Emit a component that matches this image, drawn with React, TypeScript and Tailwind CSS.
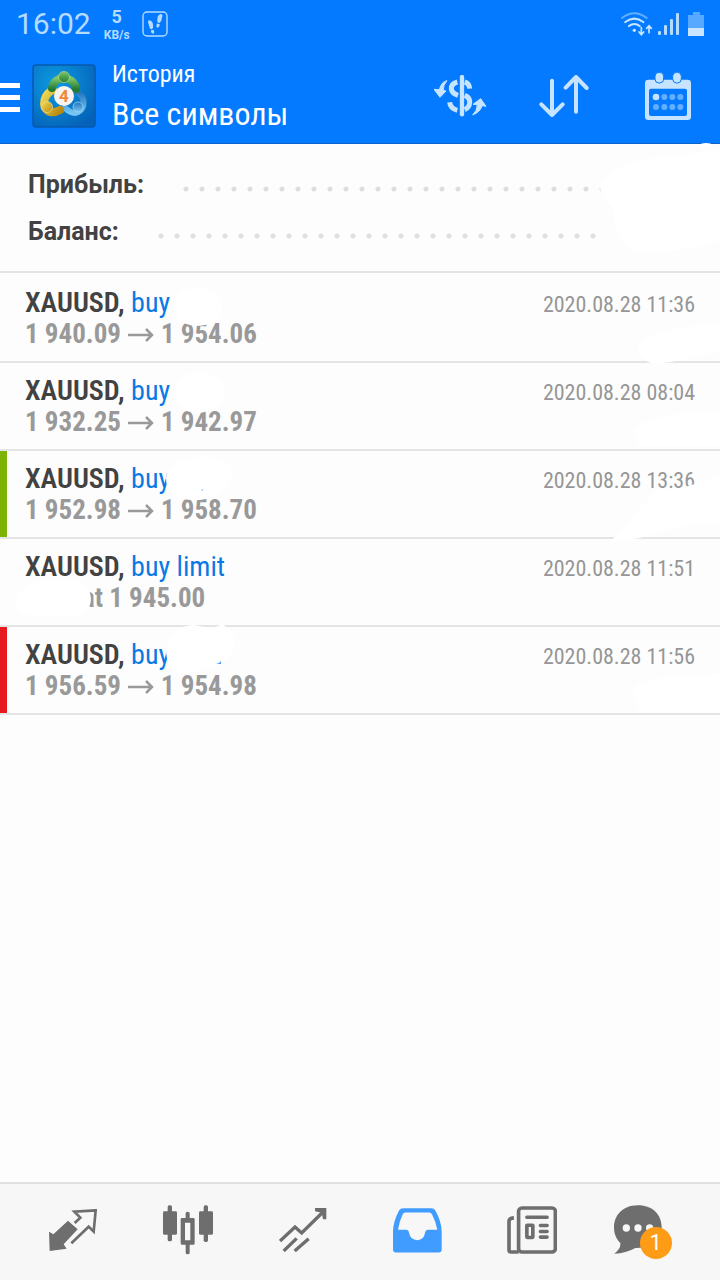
import type { ReactNode } from "react";

type Deal = {
  symbol: string;
  type: string;
  from?: string;
  to?: string;
  at?: string;
  time: string;
  mark?: "green" | "red";
};

const deals: Deal[] = [
  { symbol: "XAUUSD", type: "buy", from: "1 940.09", to: "1 954.06", time: "2020.08.28 11:36" },
  { symbol: "XAUUSD", type: "buy", from: "1 932.25", to: "1 942.97", time: "2020.08.28 08:04" },
  { symbol: "XAUUSD", type: "buy", from: "1 952.98", to: "1 958.70", time: "2020.08.28 13:36", mark: "green" },
  { symbol: "XAUUSD", type: "buy limit", at: "1 945.00", time: "2020.08.28 11:51" },
  { symbol: "XAUUSD", type: "buy", from: "1 956.59", to: "1 954.98", time: "2020.08.28 11:56", mark: "red" },
];

const condensed = "font-['Roboto_Condensed','Liberation_Sans_Narrow',Roboto,sans-serif]";

function StatusBar() {
  return (
    <div className="flex h-12 items-center pr-4 pl-4 text-[#b5dbff]">
      <span className="text-[30px] leading-8">16:02</span>
      <div className="ml-3 flex w-7 flex-col items-center font-bold">
        <span className="text-[18px] leading-[22px]">5</span>
        <span className="text-[12px] leading-[14px]">KB/s</span>
      </div>
      <svg className="ml-[11px] h-[26px] w-[26px]" viewBox="0 0 26 26" fill="currentColor">
        <rect x="1" y="1" width="24" height="24" rx="4" fill="none" stroke="currentColor" strokeWidth="1.4" />
        <path d="M6 11Q6 9 8.200 9.400Q11 10.500 11 14Q11.500 17.500 9.800 18.200Q8 18.500 7.400 16Z" />
        <path d="M8.800 19.500L11.600 18.800Q13 22 11.200 22.800Q9.300 22.800 8.800 19.500Z" />
        <path d="M20.500 4.500Q20 2.600 17.800 3.200Q15.300 4.500 15.300 8Q15 11.500 16.600 12Q18.400 12.300 19.300 9.600Z" />
        <path d="M17.800 13.300L15 12.600Q13.600 15.800 15.400 16.700Q17.200 16.600 17.800 13.300Z" />
      </svg>
      <svg className="ml-auto h-[24px] w-[32px]" viewBox="657 35 96 72" fill="none" stroke="#c9e5ff" strokeLinecap="round">
        <path d="M660 53Q697 24 734 53" stroke="#62afff" strokeWidth="6" />
        <path d="M670 65Q697 45 724 65M681 77Q697 65 713 77" strokeWidth="6.5" />
        <circle cx="697" cy="90" r="5" fill="#c9e5ff" stroke="none" />
        <path d="M718 82V102M711 95L718 103L725 95M741 97V80M734 84L741 76L748 84" strokeWidth="5" />
      </svg>
      <svg className="ml-1 h-6 w-[22px]" viewBox="0 0 22 24" fill="#b5dbff">
        <rect x="1" y="19" width="3" height="4" rx="1" />
        <rect x="7" y="13" width="3" height="10" rx="1" />
        <rect x="13" y="7" width="3" height="16" rx="1" />
        <rect x="19" y="1" width="3" height="22" rx="1" />
      </svg>
      <svg className="ml-[9px] h-6 w-4" viewBox="0 0 16 24">
        <path d="M5 0h7v3h4v13H0V3h5z" fill="#57a9ff" />
        <path d="M0 16h16v8H0z" fill="#c9e5ff" />
      </svg>
    </div>
  );
}

function Logo() {
  return (
    <svg className="h-16 w-16" viewBox="0 0 64 64">
      <defs>
        <radialGradient id="tile" cx="35%" cy="30%" r="80%">
          <stop offset="0" stopColor="#0d9ae0" />
          <stop offset="1" stopColor="#0462b8" />
        </radialGradient>
        <linearGradient id="green" x1="0" y1="0" x2="0" y2="1">
          <stop offset="0" stopColor="#7cc46a" />
          <stop offset="1" stopColor="#237c35" />
        </linearGradient>
        <linearGradient id="gold" x1="0" y1="0" x2="1" y2="1">
          <stop offset="0" stopColor="#f2dc5a" />
          <stop offset="1" stopColor="#b98a10" />
        </linearGradient>
        <linearGradient id="sky" x1="0" y1="0" x2="0" y2="1">
          <stop offset="0" stopColor="#2375bd" />
          <stop offset="1" stopColor="#76c6f3" />
        </linearGradient>
      </defs>
      <rect x="1" y="1" width="62" height="62" rx="3" fill="url(#tile)" stroke="#0959ae" strokeWidth="1.5" />
      <path d="M45 28C53 32 54 44 46 48Q41 51 33 44" fill="none" stroke="url(#sky)" strokeWidth="6" strokeLinecap="round" />
      <path d="M21 26C12 30 9 42 16 47Q21 50 28 46" fill="none" stroke="url(#gold)" strokeWidth="8" strokeLinecap="round" />
      <path d="M20 24C22 11 42 11 44 25" fill="none" stroke="url(#green)" strokeWidth="8" strokeLinecap="round" />
      <circle cx="32" cy="13" r="5.5" fill="url(#green)" stroke="#b9dc7e" strokeWidth="0.7" />
      <circle cx="15" cy="43" r="5.5" fill="url(#gold)" stroke="#f0e08a" strokeWidth="0.7" />
      <circle cx="46" cy="43" r="5" fill="url(#sky)" stroke="#a5daf7" strokeWidth="0.7" />
      <circle cx="32" cy="32" r="10" fill="#f7f3ee" />
      <text x="32" y="38" textAnchor="middle" fontSize="17" fontWeight="700" fill="#f0873a">
        4
      </text>
    </svg>
  );
}

function Header() {
  return (
    <header className="bg-[#037aff]">
      <StatusBar />
      <div className="flex h-24 items-center border-b border-[#0a63c9] pr-[29px]">
        <button aria-label="Меню" className="mt-1 flex w-5 flex-col gap-[7px]">
          <span className="h-[5px] bg-white" />
          <span className="h-[5px] bg-white" />
          <span className="h-[5px] bg-white" />
        </button>
        <div className="ml-3">
          <Logo />
        </div>
        <h1 className={`ml-4 flex-1 text-white ${condensed}`}>
          <span className="block text-[24px] leading-9">История</span>
          <span className="block text-[32px] leading-11">Все символы</span>
        </h1>
        <button aria-label="Валюта">
          <svg className="h-[42px] w-[53px]" viewBox="102 222 159 126" fill="none" stroke="#c6e4ff">
            <path d="M186 228V340" strokeWidth="13" strokeLinecap="round" />
            <path d="M172 243Q153 248 154 264Q156 277 174 283M194 243Q208 247 209 263M194 283Q210 289 209 305Q208 320 194 326M149 304Q151 323 172 328" strokeWidth="15" />
            <path d="M141 239Q124 242 118 266L102 265L120 289L138 270L130 268Q129 252 141 239ZM218 342Q232 328 232 311L219 310L242 293L258 316L246 314Q241 333 218 342Z" fill="#c6e4ff" strokeWidth="3" strokeLinejoin="round" />
          </svg>
        </button>
        <button aria-label="Сортировка" className="ml-[52px]">
          <svg className="h-[42px] w-[50px]" viewBox="417 224 150 126" fill="none" stroke="#c6e4ff" strokeWidth="12" strokeLinecap="round" strokeLinejoin="round">
            <path d="M456 241V343M424 312L456 344L488 312M528 334V231M497 262L528 230L560 263" />
          </svg>
        </button>
        <button aria-label="Период" className="ml-14">
          <svg className="h-12 w-[46px]" viewBox="735 212 138 144" fill="#c6e4ff">
            <path d="M745 235H863Q873 235 873 245V346Q873 356 863 356H745Q735 356 735 346V245Q735 235 745 235ZM753 262Q747 262 747 268V338Q747 344 753 344H855Q861 344 861 338V268Q861 262 855 262Z" fillRule="evenodd" />
            <rect x="765" y="213" width="26" height="32" rx="12" stroke="#037aff" strokeWidth="3" />
            <rect x="818" y="213" width="26" height="32" rx="12" stroke="#037aff" strokeWidth="3" />
            <circle cx="768" cy="287" r="10" />
            <g fill="#62afff">
              <circle cx="793" cy="287" r="9" />
              <circle cx="817" cy="287" r="9" />
              <circle cx="841" cy="287" r="9" />
              <circle cx="768" cy="317" r="9" />
              <circle cx="793" cy="317" r="9" />
              <circle cx="817" cy="317" r="9" />
              <circle cx="841" cy="317" r="9" />
            </g>
          </svg>
        </button>
      </div>
    </header>
  );
}

function SummaryRow({ label }: { label: string }) {
  return (
    <div className="flex h-[47px] items-center">
      <dt className="text-[25px] leading-8 font-bold text-[#424242]">{label}</dt>
      <dd className="mt-2 ml-[34px] h-4 flex-1 bg-[radial-gradient(circle,#dedede_2px,transparent_3px)] bg-[length:16px_16px]" />
    </div>
  );
}

function DealRow({ deal }: { deal: Deal }) {
  const mark =
    deal.mark === "green"
      ? "border-l-[#7cb305]"
      : deal.mark === "red"
        ? "border-l-[#e5191f]"
        : "border-l-transparent";
  return (
    <li className={`border-b-2 border-b-[#e4e4e4] ${condensed}`}>
      <div className={`border-l-[7px] pt-3 pr-[25px] pb-3 pl-[18px] ${mark}`}>
        <div className="flex items-center justify-between">
          <h2 className="text-[28px] leading-8 font-semibold text-[#424242]">
            {deal.symbol}, <span className="font-normal text-[#0b79e3]">{deal.type}</span>
          </h2>
          <time className="pt-1 text-[22px] leading-7 text-[#969696]">{deal.time}</time>
        </div>
        {deal.at ? (
          <p className="pt-px pl-[57px] text-[27px] leading-[29px] font-bold text-[#999999]">at {deal.at}</p>
        ) : (
          <p className="flex items-center pt-px text-[27px] leading-[29px] font-bold text-[#999999]">
            {deal.from}
            <svg className="mx-[7px] h-4 w-[26px]" viewBox="0 0 26 16" fill="none" stroke="currentColor" strokeWidth="2.5">
              <path d="M0 8H24M18 2L24 8L18 14" />
            </svg>
            {deal.to}
          </p>
        )}
      </div>
    </li>
  );
}

// White brush strokes that hide the amounts, lying over the list
function Strokes() {
  return (
    <>
      <svg className="pointer-events-none absolute top-0 left-0 h-[580px] w-[320px]" viewBox="0 144 320 580" fill="#fff">
        <path d="M174 304Q174 288 200 288Q222 290 222 308Q222 325 196 326Q174 324 174 304Z" />
        <path d="M174 390Q174 374 200 373Q224 375 224 392Q223 412 196 413Q174 411 174 390Z" />
        <path d="M166 478Q168 460 202 457Q232 458 232 474Q232 496 200 500Q166 502 166 478Z" />
        <path d="M16 600Q20 582 50 580Q82 578 89 590Q95 606 82 614Q50 620 25 614Q16 610 16 600Z" />
        <path d="M166 648Q172 626 194 625Q214 630 222 624Q238 634 234 650Q226 668 184 673Q166 674 166 648Z" />
        <path d="M215 664Q219 664 221 661V664Z" fill="#4b9cf0" />
        <path d="M201 490L203 489V491Z" fill="#8fc0f5" />
      </svg>
      <svg className="pointer-events-none absolute top-0 right-0 h-[580px] w-[130px] overflow-visible" viewBox="590 144 130 580" fill="#fff">
        <ellipse cx="706" cy="145" rx="6" ry="2" />
        <path d="M600 188Q602 170 640 160L720 150V240Q690 252 640 252Q614 244 614 218Q616 206 606 202Z" />
        <path d="M638 344Q642 332 720 322V350Q690 360 656 364Q638 362 638 344Z" />
        <path d="M630 430Q650 414 720 410V446H640Z" />
        <path d="M610 542L656 490Q686 489 696 483L720 476V522Q680 524 640 538Z" />
        <path d="M632 690Q640 676 720 674V712H640Z" />
      </svg>
    </>
  );
}

function Tab({ label, children }: { label: string; children: ReactNode }) {
  return (
    <button aria-label={label} className="flex items-center justify-center text-[#6e6e6e]">
      {children}
    </button>
  );
}

function TabBar() {
  return (
    <nav className="grid h-[98px] grid-cols-6 border-t-2 border-[#e0e0e0] bg-[#f7f7f7] px-4 pb-1">
      <Tab label="Котировки">
        <svg className="h-[42px] w-12" viewBox="88 90 144 126" fill="none" stroke="currentColor" strokeWidth="8">
          <path d="M88 158L101 166L145 125L174 151L132 196L141 209L90 216Z" fill="currentColor" stroke="none" />
          <path d="M165 132L182 116L164 98L228 94L222 158L207 143L155 193" />
        </svg>
      </Tab>
      <Tab label="Графики">
        <svg className="h-[50px] w-[52px]" viewBox="427 77 154 150" fill="currentColor">
          <rect x="429" y="96" width="42" height="70" rx="4" />
          <rect x="443" y="78" width="13" height="108" rx="5" />
          <rect x="537" y="96" width="42" height="70" rx="4" />
          <rect x="551" y="78" width="13" height="110" rx="5" />
          <path d="M497 102Q497 97 503 97Q509 97 509 102V116H520Q524 116 524 120V192Q524 196 520 196H509V220Q509 225 503 225Q497 225 497 220V196H486Q482 196 482 192V120Q482 116 486 116H497ZM495 130V183H511V130Z" fillRule="evenodd" />
        </svg>
      </Tab>
      <Tab label="Торговля">
        <svg className="h-[44px] w-12" viewBox="776 84 144 132" fill="none" stroke="currentColor" strokeWidth="10">
          <path d="M779 183L824 141L844 159L908 96M790 213L829 175M823 213L865 176" />
          <path d="M884 84H918V118L908 118L904 98L884 94Z" fill="currentColor" stroke="none" />
        </svg>
      </Tab>
      <Tab label="История">
        <svg className="h-[45px] w-[49px]" viewBox="70 83 147 134">
          <path d="M101 83H185Q193 83 197 90Q216 124 216 154V207Q216 216 207 216H79Q70 216 70 207V154Q70 124 88 90Q92 83 101 83ZM107 96Q102 96 99 101Q88 125 85 148H110Q117 148 118 157Q122 179 143 179Q163 179 166 157Q168 148 175 148H203Q198 122 187 101Q184 96 179 96Z" fill="#409cff" fillRule="evenodd" />
        </svg>
      </Tab>
      <Tab label="Новости">
        <svg className="h-12 w-[50px]" viewBox="415 77 151 145" fill="none" stroke="currentColor" strokeWidth="11">
          <rect x="450" y="83" width="111" height="133" rx="10" />
          <path d="M450 216H428Q421 216 421 209V124Q421 114 436 113" />
          <path d="M475 111H536M516 136H536M516 154H536M516 171H536" strokeLinecap="round" />
          <rect x="475" y="135" width="18" height="37" rx="1" />
        </svg>
      </Tab>
      <Tab label="Сообщения">
        <span className="relative block h-[50px] w-[66px]">
          <svg className="h-[50px] w-12" viewBox="734 76 144 150" fill="currentColor">
            <path d="M806 77C850 77 877 105 877 143C877 183 843 207 798 205Q770 221 735 222Q755 207 753 190C718 158 729 77 806 77Z" />
            <g fill="#f7f7f7">
              <circle cx="771" cy="145" r="11" />
              <circle cx="806" cy="145" r="11" />
              <circle cx="841" cy="145" r="11" />
            </g>
          </svg>
          <span className="absolute right-2 -bottom-1 flex size-8 items-center justify-center rounded-full bg-[#ff9c16] text-[22px] leading-6 text-white">
            1
          </span>
        </span>
      </Tab>
    </nav>
  );
}

export default function App() {
  return (
    <div className="flex min-h-screen flex-col bg-[#fdfdfd] font-[Roboto,sans-serif]">
      <Header />
      <main className="relative flex-1">
        <dl className="border-b-2 border-[#e4e4e4] pt-[17px] pr-[117px] pb-4 pl-7">
          <SummaryRow label="Прибыль:" />
          <SummaryRow label="Баланс:" />
        </dl>
        <ul className="pt-0.5">
          {deals.map((deal) => (
            <DealRow key={deal.time} deal={deal} />
          ))}
        </ul>
        <Strokes />
      </main>
      <TabBar />
    </div>
  );
}
